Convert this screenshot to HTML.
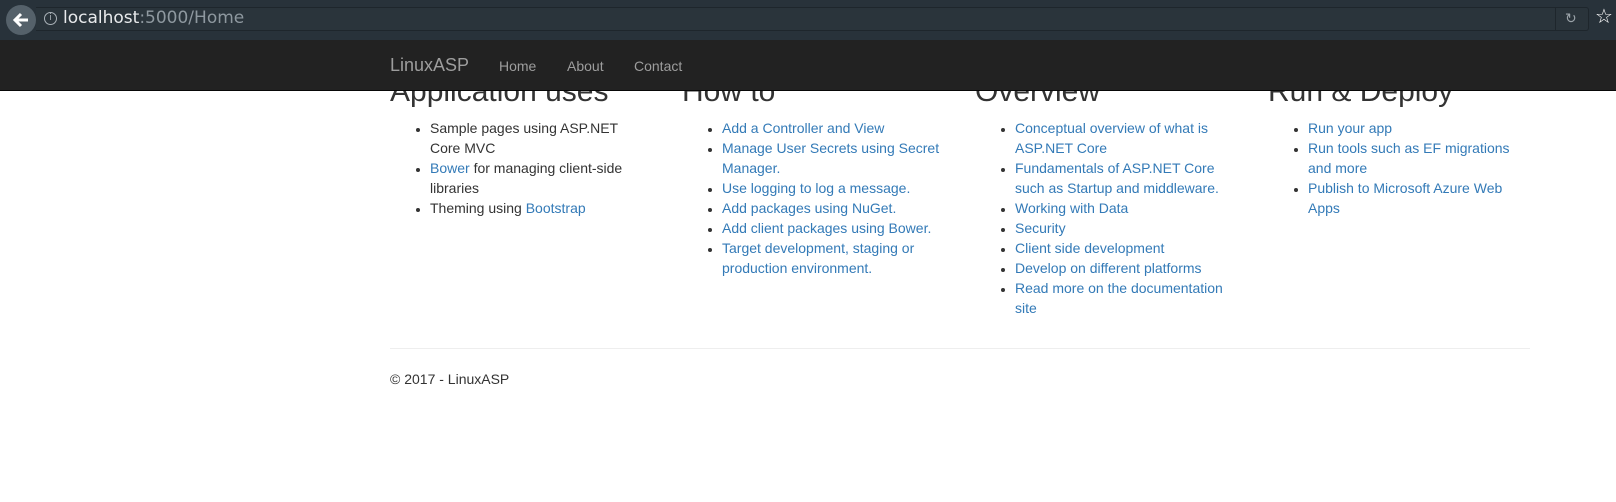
<!DOCTYPE html>
<html><head><style>
*{margin:0;padding:0;box-sizing:border-box}
body{width:1616px;height:502px;background:#fff;font-family:"Liberation Sans",Arial,sans-serif;font-size:14px;line-height:20px;color:#333;position:relative;overflow:hidden}
.chrome{position:absolute;left:0;top:0;width:1616px;height:40px;background:#28323a;z-index:6}
.omni{position:absolute;left:36px;top:7px;width:1553px;height:24px;background:#2a343b;border:1px solid #1e262c;border-left:none;border-radius:0 3px 3px 0}
.back{position:absolute;left:6px;top:5px;width:30px;height:30px;border-radius:50%;background:#55616a}
.url{position:absolute;left:63px;top:6px;font-family:"DejaVu Sans",sans-serif;font-size:17px;line-height:24px;color:#e8eaec}
.url span{color:#8e989f}
.info{position:absolute;left:44px;top:12px;width:13px;height:13px;border:1.3px solid #aab2b8;border-radius:50%;color:#aab2b8;font-size:9px;line-height:11px;text-align:center;font-family:"DejaVu Sans",sans-serif}
.nav{position:absolute;left:0;top:40px;width:1616px;height:51px;background:#222;border-bottom:1px solid #080808;z-index:5}
.brand{position:absolute;left:390px;top:15px;font-size:18px;color:#9d9d9d;line-height:20px}
.nl{position:absolute;top:16px;color:#9d9d9d;font-size:14px}
h2{position:absolute;top:75px;font-size:30px;font-weight:500;line-height:33px;color:#333}
ul{position:absolute;top:118px;width:262px;padding-left:40px}
li::marker{font-size:12px}
a{color:#337ab7;text-decoration:none}
hr{position:absolute;left:390px;top:348px;width:1140px;border:0;border-top:1px solid #eee}
.foot{position:absolute;left:390px;top:369px}
</style></head><body>
<div class="chrome">
<div class="omni"></div>
<div class="back"><svg width="30" height="30" viewBox="0 0 30 30"><path d="M22 15H10M15 9l-6 6 6 6" stroke="#fff" stroke-width="3" fill="none"/></svg></div>
<div class="info">i</div>
<div class="url">localhost<span>:5000/Home</span></div>
<div style="position:absolute;left:1555px;top:8px;width:1px;height:22px;background:#1e262c"></div>
<div style="position:absolute;left:1565px;top:9px;color:#9aa2a8;font-size:14px;font-family:'DejaVu Sans'">↻</div>
<div style="position:absolute;left:1595px;top:6px;color:#fff;font-size:20px;font-family:'DejaVu Sans'">☆</div>
</div>
<div class="nav">
<div class="brand">LinuxASP</div>
<div class="nl" style="left:499px">Home</div>
<div class="nl" style="left:567px">About</div>
<div class="nl" style="left:634px">Contact</div>
</div>
<h2 style="left:390px">Application uses</h2>
<ul style="left:390px"><li>Sample pages using ASP.NET Core MVC</li><li><a>Bower</a> for managing client-side libraries</li><li>Theming using <a>Bootstrap</a></li></ul>
<h2 style="left:682px">How to</h2>
<ul style="left:682px"><li><a>Add a Controller and View</a></li><li><a>Manage User Secrets using Secret Manager.</a></li><li><a>Use logging to log a message.</a></li><li><a>Add packages using NuGet.</a></li><li><a>Add client packages using Bower.</a></li><li><a>Target development, staging or production environment.</a></li></ul>
<h2 style="left:975px">Overview</h2>
<ul style="left:975px"><li><a>Conceptual overview of what is ASP.NET Core</a></li><li><a>Fundamentals of ASP.NET Core such as Startup and middleware.</a></li><li><a>Working with Data</a></li><li><a>Security</a></li><li><a>Client side development</a></li><li><a>Develop on different platforms</a></li><li><a>Read more on the documentation site</a></li></ul>
<h2 style="left:1268px">Run &amp; Deploy</h2>
<ul style="left:1268px"><li><a>Run your app</a></li><li><a>Run tools such as EF migrations and more</a></li><li><a>Publish to Microsoft Azure Web Apps</a></li></ul>
<hr>
<div class="foot">© 2017 - LinuxASP</div>
</body></html>
